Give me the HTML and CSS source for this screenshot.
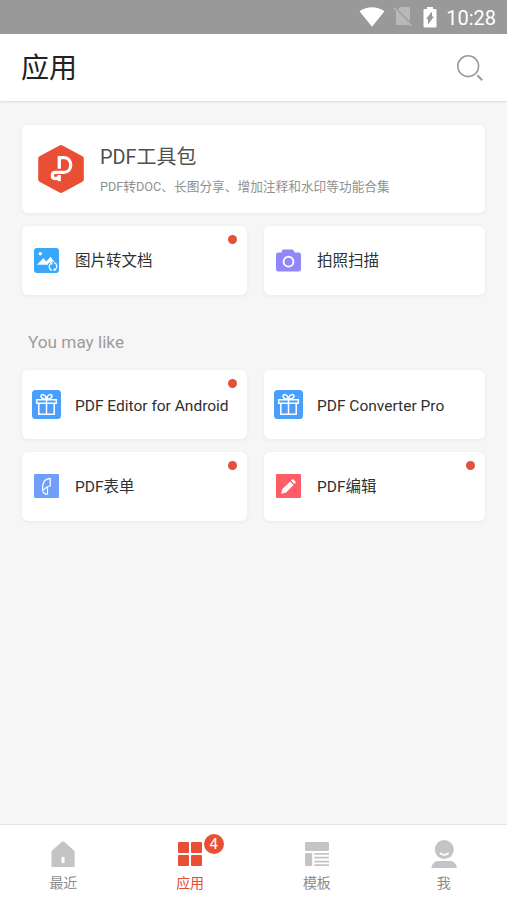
FILE: index.html
```html
<!DOCTYPE html>
<html lang="zh-CN">
<head>
<meta charset="utf-8">
<title>应用</title>
<link rel="stylesheet" href="styles.css">
</head>
<body>
<svg width="0" height="0" class="defs">
  <symbol id="gift" viewBox="0 0 29 29">
    <rect width="29" height="29" rx="3.5" fill="#499ffa"/>
    <g fill="none" stroke="#fff" stroke-width="1.5">
      <path d="M4.7 9.7H24.3V13.2H4.7ZM6.8 13.2V24.3H22.2V13.2M14.5 9.7V24.3"/>
      <path d="M14.5 9.3C12 9 9 8 9 6.2C9 3.6 13.5 3.6 14.5 9.3C15.5 3.6 20 3.6 20 6.2C20 8 17 9 14.5 9.3Z"/>
    </g>
  </symbol>
</svg>
<div class="status">
  <svg class="wifi" width="26" height="20" viewBox="0 0 26 20"><path d="M.5 4.2C8-1.2 18-1.2 25.5 4.2L13 19.7Z" fill="#fff"/></svg>
  <svg class="sim" width="20" height="22" viewBox="0 0 20 22"><path d="M7.5 1H15.5Q17 1 17 2.5V15.5L5 3.5ZM3 5L16.5 18.5L15.5 19H4.5Q3 19 3 17.5Z" fill="#b9b9b9"/><path d="M.8 1.8L18.5 19.8" stroke="#b9b9b9" stroke-width="1.5"/></svg>
  <svg class="battery" width="14" height="21" viewBox="0 0 14 21"><path d="M4 0H10V2H12.5Q13.5 2 13.5 3V19.5Q13.5 20.5 12.5 20.5H1.5Q.5 20.5 .5 19.5V3Q.5 2 1.5 2H4Z" fill="#fff"/><path d="M9 4.5V9.5H11L5 17.5V12H3Z" fill="#999"/></svg>
  <span class="clock">10:28</span>
</div>
<header class="header">
  <h1>应用</h1>
  <svg width="28" height="28" viewBox="0 0 28 28" fill="none" stroke="#999b9e"><circle cx="12.2" cy="12.2" r="10.4" stroke-width="1.6"/><path d="M21.3 21.3L26.3 26.3" stroke-width="2"/></svg>
</header>
<main class="main">
  <section class="card hero">
    <svg width="46" height="50" viewBox="0 0 46 50"><path d="M21.5 1.4Q23 .5 24.5 1.4L44 12.1Q45.8 13 45.8 14.6V35.4Q45.8 37 44 38L24.5 48.5Q23 49.4 21.5 48.5L2 38Q.2 37 .2 35.4V14.6Q.2 13 2 12.1Z" fill="#e94f35"/><g fill="none" stroke="#fff" stroke-width="3.3"><path d="M21.3 24.8V13.6H26C34.9 13.6 34.9 28.4 26 28.4H17.5C13.3 28.4 13.3 34.6 17.5 34.6Q21.3 34.6 21.3 31"/><path d="M21.3 31V37.2" stroke-width="3"/></g></svg>
    <div>
      <h2>PDF工具包</h2>
      <p>PDF转DOC、长图分享、增加注释和水印等功能合集</p>
    </div>
  </section>
  <section class="grid first">
    <div class="card item"><svg class="icon" viewBox="0 0 29 29"><rect x="2" y="2" width="25" height="25" rx="3" fill="#39a7fa"/><circle cx="8.3" cy="7.7" r="1.7" fill="#fff"/><path d="M5 18.8L11.5 12L14.2 15.5L18.5 10.8L22.5 16Q17.5 14.8 15.5 18.8Z" fill="#fff"/><path d="M19.8 24.4A4.2 4.2 0 0 1 18.8 17.2M22.2 16.6A4.2 4.2 0 0 1 23.2 23.8" fill="none" stroke="#fff" stroke-width="1.3"/><path d="M17.6 16.6L20.8 16.2L20 19.2ZM24.4 24.4L21.2 24.8L22 21.8Z" fill="#fff"/></svg><span>图片转文档</span><i class="dot"></i></div>
    <div class="card item"><svg class="icon" viewBox="0 0 29 29"><path d="M9.2 3.5H18.2Q19.2 3.5 19.8 4.7L20.7 6.5H24.5Q27 6.5 27 9V23Q27 25.5 24.5 25.5H4.5Q2 25.5 2 23V9Q2 6.5 4.5 6.5H7.5L8 4.7Q8.3 3.5 9.2 3.5Z" fill="#9187fb"/><circle cx="14.5" cy="15.7" r="4.9" fill="none" stroke="#fff" stroke-width="1.9"/></svg><span>拍照扫描</span></div>
  </section>
  <h3>You may like</h3>
  <section class="grid">
    <div class="card item"><svg class="icon"><use href="#gift"/></svg><span class="latin">PDF Editor for Android</span><i class="dot"></i></div>
    <div class="card item"><svg class="icon"><use href="#gift"/></svg><span class="latin">PDF Converter Pro</span></div>
    <div class="card item"><svg class="icon" viewBox="0 0 29 29"><rect x="2" y="2" width="25" height="24" rx="1" fill="#709ffa"/><path d="M18.2 6.3C12.5 7 10.5 10 10.5 18C14 18 12.5 14.2 18.2 14ZM10.7 18.2C10.7 21 12.5 22.3 15.5 22V15" fill="none" stroke="#fff" stroke-width="1.2" stroke-linejoin="round"/></svg><span>PDF表单</span><i class="dot"></i></div>
    <div class="card item"><svg class="icon" viewBox="0 0 29 29"><rect x="2" y="2" width="25" height="24" rx="1" fill="#fe5d66"/><path d="M7.2 21.7L8.2 17.2L16.1 9.4L19.6 12.9L11.8 20.7ZM17 8.5L18.2 7.6Q19 7 19.8 7.8L21.4 9.4Q22 10.1 21.4 10.9L20.4 12Z" fill="#fff"/></svg><span>PDF编辑</span><i class="dot"></i></div>
  </section>
</main>
<nav class="nav">
  <a class="tab"><svg viewBox="0 0 28 30"><path d="M14 2.2Q14.6 2.2 15.2 2.8L25 11.5Q25.6 12 25.6 13V28H2.5V13Q2.5 12 3.1 11.5L12.8 2.8Q13.4 2.2 14 2.2ZM12.5 18V24H15.5V18Z" fill="#c4c4c4" fill-rule="evenodd"/></svg><span>最近</span></a>
  <a class="tab active"><svg viewBox="0 0 28 30"><g fill="#e94f35"><rect x="2" y="3" width="11" height="11" rx="1"/><rect x="15" y="3" width="11" height="11" rx="1"/><rect x="2" y="16" width="11" height="11" rx="1"/><rect x="15" y="16" width="11" height="11" rx="1"/></g></svg><span>应用</span><b class="badge">4</b></a>
  <a class="tab"><svg viewBox="0 0 28 30"><g fill="#c4c4c4"><rect x="2" y="3" width="24" height="9" rx="1.3"/><rect x="2" y="14" width="7.2" height="13" rx="1.3"/><path d="M11.3 14H26V15.8H11.3ZM11.3 17.8H26V19.6H11.3ZM11.3 21.7H26V23.5H11.3ZM11.3 25.2H26V27H11.3Z"/></g></svg><span>模板</span></a>
  <a class="tab"><svg viewBox="0 0 28 30"><circle cx="14.3" cy="10.5" r="9.5" fill="#c4c4c4"/><path d="M10 14Q14.3 17.8 18.7 14" fill="none" stroke="#fff" stroke-width="1.7"/><path d="M1.6 29V27.5C3 24 5 22 8 22H20.5C23.5 22 25.5 24 26.6 27.5V29Z" fill="#c4c4c4"/></svg><span>我</span></a>
</nav>
</body>
</html>
```
FILE: styles.css
```css
* { box-sizing: border-box; }
body {
  margin: 0;
  height: 901px;
  display: flex;
  flex-direction: column;
  background: #f6f6f6;
  color: #303030;
  font-family: Roboto, "Noto Sans CJK SC", sans-serif;
  overflow: hidden;
}
h1, h2, h3, p { margin: 0; font-weight: 400; }
.defs { position: absolute; }
.status {
  height: 34px;
  background: #999;
  display: flex;
  align-items: center;
  justify-content: flex-end;
  padding-right: 11px;
  color: #fff;
}
.sim { margin-left: 8px; }
.battery { margin-left: 10px; }
.clock { margin-left: 9px; padding-top: 2px; font-size: 20px; line-height: 34px; }
.header {
  height: 67px;
  background: #fff;
  box-shadow: 0 1px 2px rgba(0, 0, 0, .12);
  display: flex;
  align-items: center;
  justify-content: space-between;
  padding: 0 23px 0 21px;
}
.header h1 { padding-top: 2px; font-size: 28px; line-height: 66px; color: #222; }
.main { flex: 1; padding: 24px 22px 0; }
.card {
  background: #fff;
  border-radius: 6px;
  box-shadow: 0 1px 4px rgba(0, 0, 0, .06);
}
.hero {
  height: 88px;
  display: flex;
  align-items: center;
  padding-left: 16px;
  gap: 15px;
}
.hero h2 { padding-left: 1px; font-size: 19.9px; line-height: 30px; color: #505050; }
.hero p { margin-top: 4px; padding-left: 1px; font-size: 12.7px; line-height: 20px; color: #919191; white-space: nowrap; }
.hero div { padding-top: 1px; }
.grid {
  display: grid;
  grid-template-columns: 225px 221px;
  grid-auto-rows: 69px;
  gap: 13px 17px;
}
.first { margin-top: 13px; }
.item {
  position: relative;
  display: flex;
  align-items: center;
  padding-left: 10px;
  gap: 14px;
  font-size: 15.5px;
  white-space: nowrap;
}
.item span { padding-bottom: 3px; }
.item .latin { padding: 2px 0 0; }
.icon { width: 29px; height: 29px; flex: none; }
.dot {
  position: absolute;
  top: 9px;
  right: 10px;
  width: 9px;
  height: 9px;
  border-radius: 50%;
  background: #e4503a;
}
.main h3 {
  margin: 33px 0 13px;
  padding-left: 6px;
  font-size: 17.2px;
  line-height: 29px;
  color: #9d9d9d;
}
.nav {
  height: 77px;
  background: #fff;
  border-top: 1px solid #e4e4e4;
  display: grid;
  grid-template-columns: repeat(4, 1fr);
}
.tab {
  position: relative;
  display: flex;
  flex-direction: column;
  align-items: center;
  padding-top: 14px;
  color: #8c8c8c;
  font-size: 14px;
}
.tab svg { width: 28px; height: 30px; }
.tab span { line-height: 20px; margin-top: 4px; }
.active { color: #e04d38; }
.badge {
  position: absolute;
  left: 77px;
  top: 9px;
  width: 20px;
  height: 20px;
  border-radius: 50%;
  background: #e94f35;
  color: #fff;
  font-size: 15px;
  font-weight: 400;
  line-height: 21px;
  text-align: center;
}
```
